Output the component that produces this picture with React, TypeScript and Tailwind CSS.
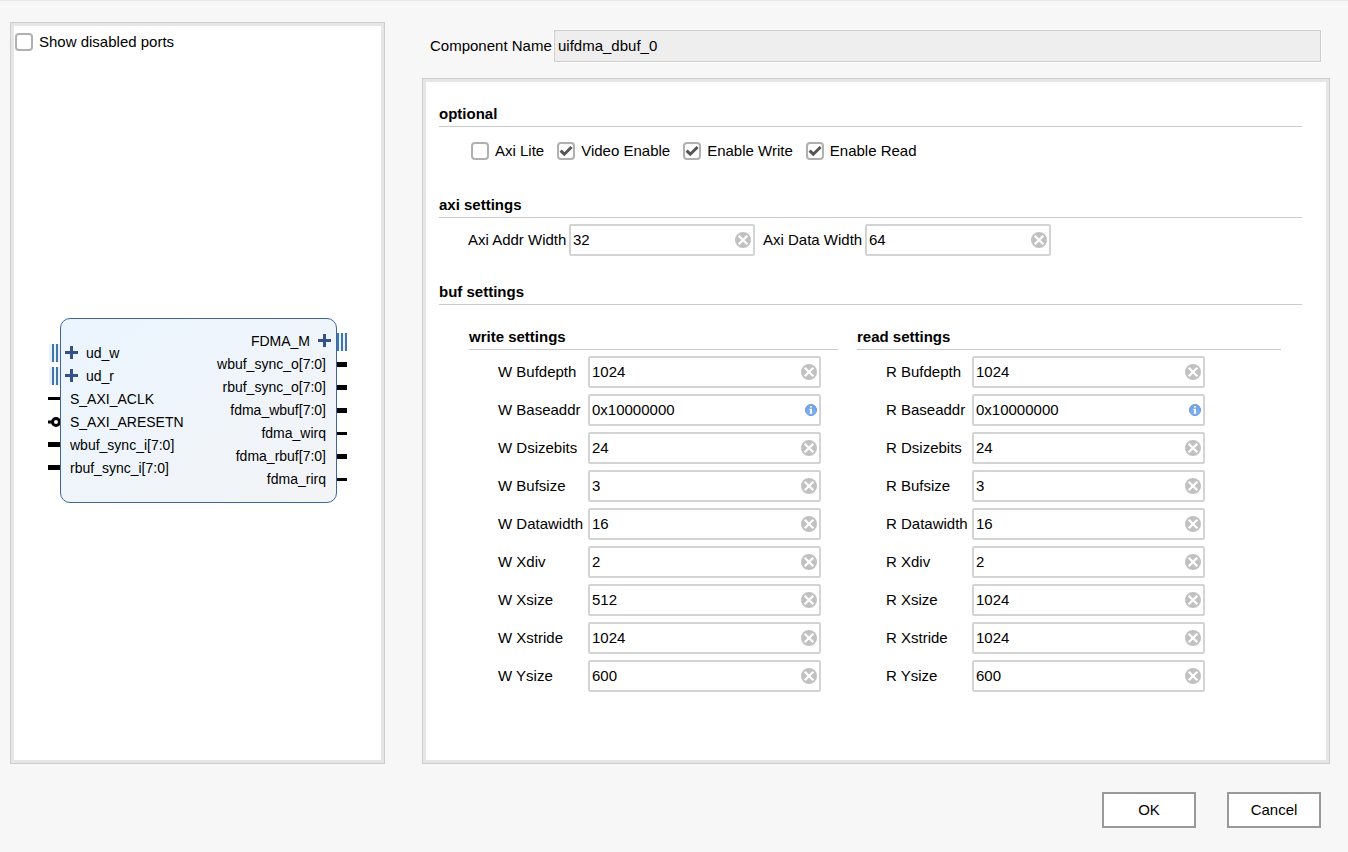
import { useState } from 'react';

type PinKind = 'bus' | 'wire' | 'vector' | 'reset';

interface Port {
  name: string;
  kind: PinKind;
}

interface Setting {
  label: string;
  value: string;
  info?: boolean;
}

const inputPorts: Port[] = [
  { name: 'ud_w', kind: 'bus' },
  { name: 'ud_r', kind: 'bus' },
  { name: 'S_AXI_ACLK', kind: 'wire' },
  { name: 'S_AXI_ARESETN', kind: 'reset' },
  { name: 'wbuf_sync_i[7:0]', kind: 'vector' },
  { name: 'rbuf_sync_i[7:0]', kind: 'vector' },
];

const outputPorts: Port[] = [
  { name: 'FDMA_M', kind: 'bus' },
  { name: 'wbuf_sync_o[7:0]', kind: 'vector' },
  { name: 'rbuf_sync_o[7:0]', kind: 'vector' },
  { name: 'fdma_wbuf[7:0]', kind: 'vector' },
  { name: 'fdma_wirq', kind: 'wire' },
  { name: 'fdma_rbuf[7:0]', kind: 'vector' },
  { name: 'fdma_rirq', kind: 'wire' },
];

const writeSettings: Setting[] = [
  { label: 'W Bufdepth', value: '1024' },
  { label: 'W Baseaddr', value: '0x10000000', info: true },
  { label: 'W Dsizebits', value: '24' },
  { label: 'W Bufsize', value: '3' },
  { label: 'W Datawidth', value: '16' },
  { label: 'W Xdiv', value: '2' },
  { label: 'W Xsize', value: '512' },
  { label: 'W Xstride', value: '1024' },
  { label: 'W Ysize', value: '600' },
];

const readSettings: Setting[] = [
  { label: 'R Bufdepth', value: '1024' },
  { label: 'R Baseaddr', value: '0x10000000', info: true },
  { label: 'R Dsizebits', value: '24' },
  { label: 'R Bufsize', value: '3' },
  { label: 'R Datawidth', value: '16' },
  { label: 'R Xdiv', value: '2' },
  { label: 'R Xsize', value: '1024' },
  { label: 'R Xstride', value: '1024' },
  { label: 'R Ysize', value: '600' },
];

function toId(label: string) {
  return label.toLowerCase().replace(/ /g, '-');
}

function CheckBox({ label, checked = false }: { label: string; checked?: boolean }) {
  return (
    <label className="flex items-center gap-1.5 leading-[18px]">
      <span className="grid size-[18px] shrink-0">
        <input
          type="checkbox"
          defaultChecked={checked}
          className="peer col-start-1 row-start-1 size-[18px] appearance-none rounded border-2 border-[#b0b0b0] bg-white"
        />
        <svg
          viewBox="0 0 18 18"
          className="pointer-events-none invisible col-start-1 row-start-1 size-[18px] peer-checked:visible"
        >
          <path d="M3.6 8.6 L7.3 12.2 L14.6 5" fill="none" stroke="#555" strokeWidth="3" />
        </svg>
      </span>
      {label}
    </label>
  );
}

function ClearIcon() {
  return (
    <svg viewBox="0 0 16 16" className="size-4">
      <circle cx="8" cy="8" r="8" fill="#c1c1c1" />
      <path d="M3.7 3.7 L12.3 12.3 M12.3 3.7 L3.7 12.3" stroke="#fff" strokeWidth="2.2" />
    </svg>
  );
}

function InfoIcon() {
  return (
    <svg viewBox="0 0 12 12" className="size-3">
      <defs>
        <linearGradient id="info" x1="0" y1="0" x2="0" y2="1">
          <stop offset="0" stopColor="#6f9fe0" />
          <stop offset="1" stopColor="#7db8ff" />
        </linearGradient>
      </defs>
      <circle cx="6" cy="6" r="5.5" fill="url(#info)" stroke="#6698dc" />
      <path d="M5 2 H7 V3.6 H5 Z M4.4 4.8 H7 V9.8 H5 V6 H4.4 Z" fill="#fff" />
    </svg>
  );
}

function Field({ id, initial, info, className }: { id: string; initial: string; info?: boolean; className: string }) {
  const [value, setValue] = useState(initial);
  return (
    <div className={`flex h-8 items-center rounded-[2px] border-2 border-[#d4d4d4] bg-white pr-0.5 ${className}`}>
      <input
        id={id}
        type="text"
        value={value}
        onChange={(e) => setValue(e.target.value)}
        className="min-w-0 flex-1 bg-transparent pl-0.5 outline-none"
      />
      {info ? (
        <button type="button" aria-label="Info">
          <InfoIcon />
        </button>
      ) : (
        <button type="button" aria-label="Clear" onClick={() => setValue('')}>
          <ClearIcon />
        </button>
      )}
    </div>
  );
}

function Heading({ children }: { children: string }) {
  return <h2 className="border-b border-[#cbcbcb] pb-0.5 font-bold leading-5">{children}</h2>;
}

function SettingRows({ items, labelClass }: { items: Setting[]; labelClass: string }) {
  return (
    <div className="mt-1.5 flex flex-col gap-1.5 pl-[29px]">
      {items.map((item) => (
        <div key={item.label} className="flex items-center">
          <label htmlFor={toId(item.label)} className={`shrink-0 whitespace-nowrap ${labelClass}`}>
            {item.label}
          </label>
          <Field id={toId(item.label)} initial={item.value} info={item.info} className="w-[233px]" />
        </div>
      ))}
    </div>
  );
}

function Plus() {
  return (
    <svg viewBox="0 0 13 13" className="size-[13px] shrink-0">
      <path d="M6.5 0 V13 M0 6.5 H13" stroke="#34518a" strokeWidth="3" />
    </svg>
  );
}

function Pin({ kind, side }: { kind: PinKind; side: 'in' | 'out' }) {
  return (
    <div className={`flex h-[23px] items-center ${side === 'in' ? 'justify-end' : 'justify-start'}`}>
      {kind === 'bus' && side === 'in' && (
        <svg viewBox="0 0 11 18" className="h-[18px] w-[11px]">
          <path d="M0 0 H11 V18 H0 Z" fill="#e8f3fb" />
          <path d="M4 0 V18 M8 0 V18" stroke="#4077a8" strokeWidth="2" />
        </svg>
      )}
      {kind === 'bus' && side === 'out' && (
        <svg viewBox="0 0 10 18" className="h-[18px] w-2.5">
          <path d="M0 0 H10 V18 H0 Z" fill="#e8f3fb" />
          <path d="M1 0 V18 M5 0 V18 M9 0 V18" stroke="#4077a8" strokeWidth="2" />
        </svg>
      )}
      {kind === 'wire' && <span className="h-[3px] w-full bg-black" />}
      {kind === 'vector' && <span className="h-[5px] w-full bg-black" />}
      {kind === 'reset' && (
        <svg viewBox="0 0 12 10" className="h-2.5 w-3">
          <path d="M0 5 H4" stroke="#000" strokeWidth="3" />
          <circle cx="8" cy="5" r="3.5" fill="#fff" stroke="#000" strokeWidth="3" />
        </svg>
      )}
    </div>
  );
}

function BlockSymbol() {
  return (
    <div className="flex text-sm">
      <div className="w-3 pt-[23px]">
        {inputPorts.map((port) => (
          <Pin key={port.name} kind={port.kind} side="in" />
        ))}
      </div>
      <div className="flex h-[185px] w-[277px] justify-between rounded-[10px] border border-[#4065a5] bg-linear-to-br from-[#ebf5ff] to-[#f3f4f6]">
        <ul className="pt-[22px]">
          {inputPorts.map((port) => (
            <li key={port.name} className={`flex h-[23px] items-center gap-2 ${port.kind === 'bus' ? 'pl-1' : 'pl-[9px]'}`}>
              {port.kind === 'bus' && <Plus />}
              {port.name}
            </li>
          ))}
        </ul>
        <ul className="pt-2.5">
          {outputPorts.map((port) => (
            <li
              key={port.name}
              className={`flex h-[23px] items-center justify-end gap-2 ${port.kind === 'bus' ? 'pr-[5px]' : 'pr-2.5'}`}
            >
              {port.name}
              {port.kind === 'bus' && <Plus />}
            </li>
          ))}
        </ul>
      </div>
      <div className="w-2.5 pt-3">
        {outputPorts.map((port) => (
          <Pin key={port.name} kind={port.kind} side="out" />
        ))}
      </div>
    </div>
  );
}

export default function App() {
  return (
    <div className="min-h-screen border-t border-[#e6e6e6] bg-[#f7f7f7] pt-[21px] pr-[18px] pb-6 pl-2.5 font-['Liberation_Sans',Arial,sans-serif] text-[15px] leading-5 text-black">
      <main className="flex gap-[37px]">
        <section className="w-[375px] shrink-0 border border-[#cdcdcd]">
          <div className="flex h-full flex-col border-[3px] border-[#e6e6e6] bg-white pt-[7px]">
            <div className="pl-px">
              <CheckBox label="Show disabled ports" />
            </div>
            <div className="mt-[267px] pl-[34px]">
              <BlockSymbol />
            </div>
          </div>
        </section>

        <form className="min-w-0 flex-1 pt-2">
          <div className="flex items-center pr-[9px] pl-2">
            <label htmlFor="component-name" className="w-[124px] shrink-0 whitespace-nowrap">
              Component Name
            </label>
            <input
              id="component-name"
              type="text"
              readOnly
              defaultValue="uifdma_dbuf_0"
              className="h-8 min-w-0 flex-1 border border-[#cdcdcd] bg-[#eeeeee] px-[3px] pb-0.5 ring-1 ring-white outline-none"
            />
          </div>

          <div className="mt-4 border border-[#cdcdcd]">
            <div className="border-[3px] border-[#e6e6e6] bg-white pt-[22px] pr-6 pb-[68px] pl-[13px]">
              <Heading>optional</Heading>
              <div className="mt-[15px] flex gap-[13px] pl-8">
                <CheckBox label="Axi Lite" />
                <CheckBox label="Video Enable" checked />
                <CheckBox label="Enable Write" checked />
                <CheckBox label="Enable Read" checked />
              </div>

              <div className="mt-[35px]">
                <Heading>axi settings</Heading>
                <div className="mt-1.5 flex items-center gap-2 pl-[29px]">
                  <div className="flex items-center">
                    <label htmlFor="axi-addr-width" className="w-[101px] shrink-0">
                      Axi Addr Width
                    </label>
                    <Field id="axi-addr-width" initial="32" className="w-[186px]" />
                  </div>
                  <div className="flex items-center">
                    <label htmlFor="axi-data-width" className="w-[102px] shrink-0">
                      Axi Data Width
                    </label>
                    <Field id="axi-data-width" initial="64" className="w-[186px]" />
                  </div>
                </div>
              </div>

              <div className="mt-[26px]">
                <Heading>buf settings</Heading>
                <div className="mt-[22px] flex gap-[19px] pr-[21px] pl-[30px]">
                  <div className="flex-[369]">
                    <Heading>write settings</Heading>
                    <SettingRows items={writeSettings} labelClass="w-[90px]" />
                  </div>
                  <div className="flex-[424]">
                    <Heading>read settings</Heading>
                    <SettingRows items={readSettings} labelClass="w-[86px]" />
                  </div>
                </div>
              </div>
            </div>
          </div>
        </form>
      </main>

      <footer className="mt-7 flex justify-end gap-[31px] pr-[9px]">
        <button type="button" className="h-9 w-[94px] border-2 border-[#999999] bg-white">
          OK
        </button>
        <button type="button" className="h-9 w-[94px] border-2 border-[#999999] bg-white">
          Cancel
        </button>
      </footer>
    </div>
  );
}
